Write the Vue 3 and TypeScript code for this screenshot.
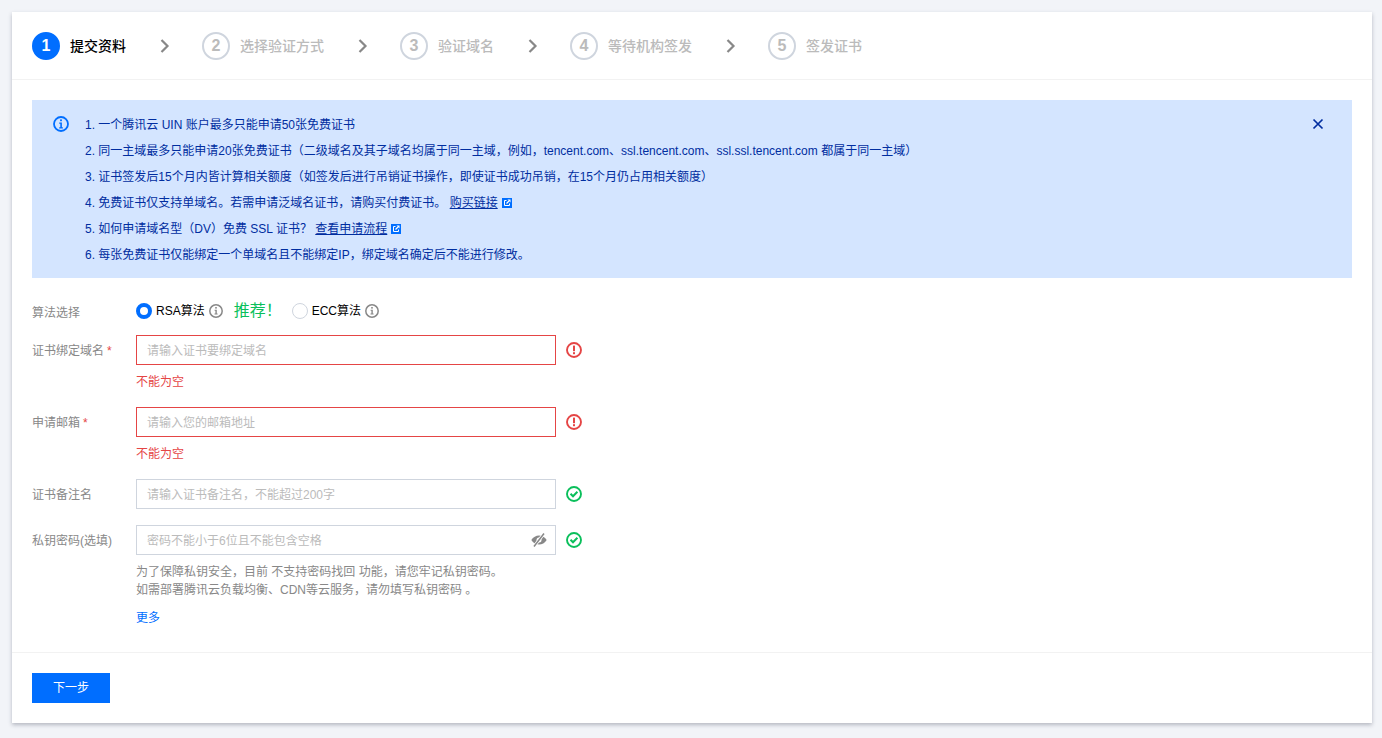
<script setup lang="ts">
const steps = ['提交资料', '选择验证方式', '验证域名', '等待机构签发', '签发证书']
</script>

<template>
  <div class="page">
    <main class="card">
      <header class="steps">
        <template v-for="(s, i) in steps" :key="s">
          <div class="step" :class="{ active: i === 0 }">
            <span class="num">{{ i + 1 }}</span>
            <span class="step-label">{{ s }}</span>
          </div>
          <svg v-if="i < steps.length - 1" class="chev" width="10" height="14" viewBox="0 0 10 14">
            <path d="M1.500 1 7.500 7l-6 6" fill="none" stroke="#888" stroke-width="2.200" />
          </svg>
        </template>
      </header>

      <section class="body">
        <div class="alert">
          <svg class="alert-icon" width="16" height="16" viewBox="0 0 16 16">
            <circle cx="8" cy="8" r="7" fill="none" stroke="#006eff" stroke-width="1.800" />
            <rect x="7.100" y="3.400" width="1.800" height="1.800" fill="#006eff" />
            <path d="M6.200 6.600h2.700v4.600h1v1.200H6.200v-1.200h1.100V7.800H6.200z" fill="#006eff" />
          </svg>
          <div class="alert-text">
            <p>1. 一个腾讯云 UIN 账户最多只能申请50张免费证书</p>
            <p>2. 同一主域最多只能申请20张免费证书（二级域名及其子域名均属于同一主域，例如，tencent.com、ssl.tencent.com、ssl.ssl.tencent.com 都属于同一主域）</p>
            <p>3. 证书签发后15个月内皆计算相关额度（如签发后进行吊销证书操作，即使证书成功吊销，在15个月仍占用相关额度）</p>
            <p>4. 免费证书仅支持单域名。若需申请泛域名证书，请购买付费证书。 <a class="alert-link">购买链接</a>
              <svg class="ext" width="10" height="10" viewBox="0 0 10 10">
                <path d="M0 0h10v10H0z" fill="#006eff" />
                <path d="M4.500 2.500h-2v5h5v-2" fill="none" stroke="#fff" stroke-width="1" />
                <path d="M4.500 5.500 7 3" fill="none" stroke="#fff" stroke-width="1.200" />
                <path d="M5.500 1.500h3v3z" fill="#fff" />
              </svg>
            </p>
            <p>5. 如何申请域名型（DV）免费 SSL 证书？ <a class="alert-link">查看申请流程</a>
              <svg class="ext" width="10" height="10" viewBox="0 0 10 10">
                <path d="M0 0h10v10H0z" fill="#006eff" />
                <path d="M4.500 2.500h-2v5h5v-2" fill="none" stroke="#fff" stroke-width="1" />
                <path d="M4.500 5.500 7 3" fill="none" stroke="#fff" stroke-width="1.200" />
                <path d="M5.500 1.500h3v3z" fill="#fff" />
              </svg>
            </p>
            <p>6. 每张免费证书仅能绑定一个单域名且不能绑定IP，绑定域名确定后不能进行修改。</p>
          </div>
          <svg class="close" width="12" height="12" viewBox="0 0 12 12">
            <path d="M1.500 1.500l9 9M10.500 1.500l-9 9" stroke="#002da0" stroke-width="1.700" fill="none" />
          </svg>
        </div>

        <form class="form" @submit.prevent>
          <div class="row algo">
            <label class="label">算法选择</label>
            <div class="radios">
              <span class="radio on"></span>
              <span class="radio-text">RSA算法</span>
              <svg class="tip" width="14" height="14" viewBox="0 0 14 14">
                <circle cx="7" cy="7" r="6.200" fill="none" stroke="#888" stroke-width="1.500" />
                <rect x="6.200" y="3" width="1.600" height="1.600" fill="#888" />
                <path d="M5.600 5.700h2.200v3.700h.8v1H5.500v-1h.9V6.700h-.8z" fill="#888" />
              </svg>
              <span class="recommend">推荐！</span>
              <span class="radio"></span>
              <span class="radio-text">ECC算法</span>
              <svg class="tip" width="14" height="14" viewBox="0 0 14 14">
                <circle cx="7" cy="7" r="6.200" fill="none" stroke="#888" stroke-width="1.500" />
                <rect x="6.200" y="3" width="1.600" height="1.600" fill="#888" />
                <path d="M5.600 5.700h2.200v3.700h.8v1H5.500v-1h.9V6.700h-.8z" fill="#888" />
              </svg>
            </div>
          </div>

          <div class="row">
            <label class="label">证书绑定域名<span class="req">*</span></label>
            <div class="ctl">
              <div class="line">
                <input class="input bad" placeholder="请输入证书要绑定域名" />
                <svg class="state" width="16" height="16" viewBox="0 0 16 16">
                  <circle cx="8" cy="8" r="7" fill="none" stroke="#e54545" stroke-width="1.900" />
                  <rect x="7" y="3.600" width="2" height="5.600" fill="#e54545" />
                  <rect x="7" y="10.200" width="2" height="2" fill="#e54545" />
                </svg>
              </div>
              <div class="err">不能为空</div>
            </div>
          </div>

          <div class="row">
            <label class="label">申请邮箱<span class="req">*</span></label>
            <div class="ctl">
              <div class="line">
                <input class="input bad" placeholder="请输入您的邮箱地址" />
                <svg class="state" width="16" height="16" viewBox="0 0 16 16">
                  <circle cx="8" cy="8" r="7" fill="none" stroke="#e54545" stroke-width="1.900" />
                  <rect x="7" y="3.600" width="2" height="5.600" fill="#e54545" />
                  <rect x="7" y="10.200" width="2" height="2" fill="#e54545" />
                </svg>
              </div>
              <div class="err">不能为空</div>
            </div>
          </div>

          <div class="row">
            <label class="label">证书备注名</label>
            <div class="ctl">
              <div class="line">
                <input class="input" placeholder="请输入证书备注名，不能超过200字" />
                <svg class="state" width="16" height="16" viewBox="0 0 16 16">
                  <circle cx="8" cy="8" r="7" fill="none" stroke="#0abf5b" stroke-width="1.900" />
                  <path d="M4.500 7.800l2.500 2.500 4.400-4.500" fill="none" stroke="#0abf5b" stroke-width="2" />
                </svg>
              </div>
            </div>
          </div>

          <div class="row">
            <label class="label">私钥密码(选填)</label>
            <div class="ctl">
              <div class="line">
                <div class="pw">
                  <input class="input" placeholder="密码不能小于6位且不能包含空格" />
                  <svg class="eye" width="16" height="16" viewBox="0 0 16 16">
                    <path d="M.3 8C2.200 4.900 5 3.400 8 3.400S13.800 4.900 15.700 8c-1.900 3.100-4.700 4.600-7.700 4.600S2.200 11.100.3 8z" fill="#888" />
                    <circle cx="8" cy="8" r="2.500" fill="#fff" />
                    <path d="M3 14.500 13 1.500" stroke="#fff" stroke-width="3" />
                    <path d="M3 14.500 13 1.500" stroke="#888" stroke-width="1.500" />
                  </svg>
                </div>
                <svg class="state" width="16" height="16" viewBox="0 0 16 16">
                  <circle cx="8" cy="8" r="7" fill="none" stroke="#0abf5b" stroke-width="1.900" />
                  <path d="M4.500 7.800l2.500 2.500 4.400-4.500" fill="none" stroke="#0abf5b" stroke-width="2" />
                </svg>
              </div>
              <p class="help">为了保障私钥安全，目前 不支持密码找回 功能，请您牢记私钥密码。<br />如需部署腾讯云负载均衡、CDN等云服务，请勿填写私钥密码 。</p>
              <a class="more">更多</a>
            </div>
          </div>
        </form>
      </section>

      <footer class="foot">
        <button class="next" type="button">下一步</button>
      </footer>
    </main>
  </div>
</template>

<style>
html, body { margin: 0; background: #f2f4f8; }
</style>

<style scoped>
.page {
  box-sizing: border-box;
  padding: 12px 10px 15px 12px;
  background: #f2f4f8;
  font: 12px/18px "Liberation Sans", "Noto Sans CJK SC", sans-serif;
  color: #000;
}
.card {
  background: #fff;
  box-shadow: 0 2px 4px rgba(54, 58, 80, 0.32);
}
.steps {
  display: flex;
  align-items: center;
  height: 67px;
  padding: 0 20px;
  border-bottom: 1px solid #f2f2f2;
}
.step { display: flex; align-items: center; gap: 10px; }
.num {
  box-sizing: border-box;
  width: 28px;
  height: 28px;
  border: 2px solid #cfd5de;
  border-radius: 50%;
  display: flex;
  align-items: center;
  justify-content: center;
  font: 700 16px/1 "Liberation Sans", sans-serif;
  color: #bbb;
}
.step-label { font-size: 14px; line-height: 20px; color: #bbb; font-weight: 500; }
.active .num { background: #006eff; border-color: #006eff; color: #fff; }
.active .step-label { color: #000; }
.chev { margin: 0 32px 0 34px; flex: none; }

.body { padding: 20px 20px 25px; }
.alert {
  display: flex;
  padding: 12px 20px 10px 21px;
  background: #d4e5ff;
  color: #002da0;
}
.alert-icon { flex: none; margin: 4px 16px 0 0; }
.alert-text { flex: 1; }
.alert-text p { margin: 0; line-height: 26px; }
.alert-link { text-decoration: underline; color: #002da0; cursor: pointer; }
.ext { margin-left: 4px; vertical-align: -1px; }
.close { flex: none; margin: 6px 8px 0 0; }

.form { margin-top: 21px; }
.row { display: flex; margin-bottom: 16px; }
.row:last-child { margin-bottom: 0; }
.algo { margin-bottom: 12px; height: 24px; align-items: center; }
.label { box-sizing: border-box; width: 104px; height: 30px; flex: none; padding-top: 1px; line-height: 30px; color: #888; }
.algo .label { height: auto; padding-top: 4px; line-height: 24px; }
.req { color: #e54545; margin-left: 3px; }
.radios { display: flex; align-items: center; }
.radio {
  box-sizing: border-box;
  width: 16px;
  height: 16px;
  border: 1px solid #cfd5de;
  border-radius: 50%;
  margin-right: 4px;
}
.radio.on { border: 4px solid #006eff; }
.radio-text { line-height: 24px; }
.tip { margin-left: 4px; }
.recommend {
  width: 58px;
  margin-left: 11px;
  font-size: 16px;
  line-height: 22px;
  color: #0abf5b;
}
.ctl { flex: 1; }
.line { display: flex; align-items: center; }
.input {
  box-sizing: border-box;
  display: block;
  width: 420px;
  height: 30px;
  padding: 2px 10px 0;
  border: 1px solid #cfd5de;
  border-radius: 0;
  outline: none;
  background: #fff;
  font: inherit;
  color: #000;
}
.input::placeholder { color: #bbb; opacity: 1; }
.input.bad { border-color: #e54545; }
.state { margin-left: 10px; flex: none; }
.pw { position: relative; width: 420px; height: 30px; }
.eye { position: absolute; right: 9px; top: 7px; }
.err { color: #e54545; line-height: 18px; margin-top: 8px; }
.help { margin: 8px 0 0; color: #888; }
.more { display: block; margin-top: 10px; color: #006eff; }
.foot { padding: 20px; border-top: 1px solid #f2f2f2; }
.next {
  display: block;
  width: 78px;
  height: 30px;
  padding: 0;
  border: none;
  background: #006eff;
  color: #fff;
  font: inherit;
}
</style>
